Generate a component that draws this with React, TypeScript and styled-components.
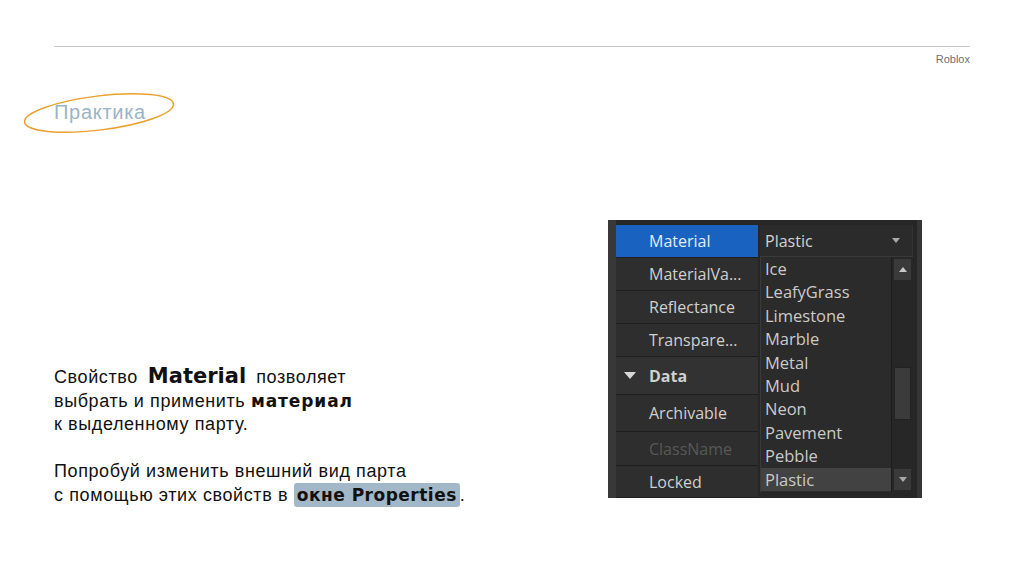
import styled, { createGlobalStyle } from "styled-components";

const GlobalStyle = createGlobalStyle`
  html, body {
    margin: 0;
    padding: 0;
    background: #ffffff;
  }
`;

const Slide = styled.div`
  width: 1024px;
  height: 574px;
  overflow: hidden;
  background: #ffffff;
  font-family: "Liberation Sans", Arial, sans-serif;
`;

const Header = styled.header`
  margin: 46px 54px 0 54px;
  border-top: 1px solid #c4c4c4;
`;

const Source = styled.div`
  margin-top: 5px;
  text-align: right;
  font-size: 11px;
  line-height: 14px;
  color: #6f6f6f;
`;

const TitleWrap = styled.div`
  position: relative;
  display: inline-block;
  margin: 34px 0 0 54px;
`;

const Title = styled.h1`
  margin: 0;
  font-size: 20px;
  line-height: 24px;
  font-weight: 400;
  letter-spacing: 0.7px;
  color: #9bb4c6;
`;

const Circle = styled.svg`
  position: absolute;
  left: -30px;
  top: -8px;
  overflow: visible;
  pointer-events: none;
`;

const Content = styled.div`
  display: flex;
  margin-top: 96px;
`;

const TextColumn = styled.div`
  width: 554px;
  padding: 145px 0 0 54px;
  font-size: 18px;
  line-height: 23.5px;
  letter-spacing: 0.6px;
  color: #111111;
`;

const Paragraph = styled.p`
  margin: 0 0 23.5px 0;
`;

const Big = styled.b`
  font-family: "DejaVu Sans", sans-serif;
  font-size: 21px;
  letter-spacing: 0;
  margin: 0 10px 0 10px;
`;

const Mark = styled.b<{ $hl?: boolean }>`
  font-family: "DejaVu Sans", sans-serif;
  font-size: 17px;
  letter-spacing: ${(p) => (p.$hl ? "0.5px" : "0.9px")};
  background: ${(p) => (p.$hl ? "#a2b8c8" : "transparent")};
  border-radius: 3px;
  padding: ${(p) => (p.$hl ? "2px 3px" : "0")};
`;

/* Properties panel */

const Panel = styled.div`
  display: flex;
  width: 306px;
  height: 273px;
  padding-top: 5px;
  background: #262626;
  border-left: 8px solid #383838;
  font-family: "Open Sans", "Noto Sans", sans-serif;
  font-size: 16px;
`;

const NameColumn = styled.div`
  display: flex;
  flex-direction: column;
  width: 142px;
  margin-right: 2px;
`;

const NameRow = styled.div<{ $h: number; $active?: boolean; $dim?: boolean; $section?: boolean }>`
  display: flex;
  align-items: center;
  height: ${(p) => p.$h - 1}px;
  border-bottom: 1px solid #1e1e1e;
  padding-left: ${(p) => (p.$section ? "8px" : "33px")};
  background: ${(p) => (p.$active ? "#1a62bf" : p.$section ? "#323232" : "#2e2e2e")};
  color: ${(p) => (p.$active ? "#e4ecf6" : p.$dim ? "#585858" : "#d0d0d0")};
  font-weight: ${(p) => (p.$section ? 700 : 400)};
  white-space: nowrap;
`;

const Caret = styled.span`
  width: 0;
  height: 0;
  margin-right: 13px;
  border-left: 6px solid transparent;
  border-right: 6px solid transparent;
  border-top: 7px solid #d8d8d8;
`;

const DropDown = styled.div`
  display: flex;
  flex-direction: column;
  width: 153px;
`;

const DropHead = styled.div`
  display: flex;
  align-items: center;
  justify-content: space-between;
  height: 31px;
  padding: 0 12px 0 5px;
  background: #2b2b2b;
  border-bottom: 1px solid #3a3a3a;
  border-right: 1px solid #333333;
  color: #d2d2d2;
`;

const SmallArrow = styled.span<{ $up?: boolean }>`
  width: 0;
  height: 0;
  border-left: 4px solid transparent;
  border-right: 4px solid transparent;
  ${(p) => (p.$up ? "border-bottom: 5px solid #c9c9c9;" : "border-top: 5px solid #a9a9a9;")}
`;

const List = styled.div`
  display: flex;
  height: 235px;
  background: #2b2b2b;
  border-left: 1px solid #3a3a3a;
`;

const Items = styled.div`
  flex: 1;
  display: flex;
  flex-direction: column;
  font-size: 16.5px;
`;

const Item = styled.div<{ $selected?: boolean }>`
  height: 23.4px;
  line-height: 23.4px;
  padding-left: 4px;
  color: #cacaca;
  background: ${(p) => (p.$selected ? "#424242" : "transparent")};
`;

const Scrollbar = styled.div`
  display: flex;
  flex-direction: column;
  width: 22px;
  padding: 2px;
  box-sizing: border-box;
  background: #272727;
  border-left: 1px solid #1c1c1c;
`;

const ScrollButton = styled.div`
  display: flex;
  align-items: center;
  justify-content: center;
  height: 21px;
  background: #3a3a3a;
`;

const Track = styled.div`
  flex: 1;
`;

const Thumb = styled.div`
  height: 53px;
  margin-top: 87px;
  background: #3b3b3b;
  border: 1px solid #222222;
  box-sizing: border-box;
`;

const Gutter = styled.div`
  width: 5px;
  margin-left: 4px;
  margin-top: -5px;
  background: #353535;
`;

const rows = [
  { name: "Material", h: 33, active: true },
  { name: "MaterialVa...", h: 33 },
  { name: "Reflectance", h: 33 },
  { name: "Transpare...", h: 33 },
  { name: "Data", h: 38, section: true },
  { name: "Archivable", h: 37 },
  { name: "ClassName", h: 34, dim: true },
  { name: "Locked", h: 32 },
];

const materials = [
  "Ice",
  "LeafyGrass",
  "Limestone",
  "Marble",
  "Metal",
  "Mud",
  "Neon",
  "Pavement",
  "Pebble",
  "Plastic",
];

const App = () => {
  return (
    <Slide>
      <GlobalStyle />
      <Header>
        <Source>Roblox</Source>
      </Header>
      <TitleWrap>
        <Title>Практика</Title>
        <Circle width="152" height="44" viewBox="0 0 152 44">
          <ellipse
            cx="75"
            cy="21"
            rx="75"
            ry="17"
            transform="rotate(-7 75 21)"
            fill="none"
            stroke="#e9a02c"
            strokeWidth="1.5"
          />
        </Circle>
      </TitleWrap>
      <Content>
        <TextColumn>
          <Paragraph>
            Свойство<Big>Material</Big>позволяет
            <br />
            выбрать и применить <Mark>материал</Mark>
            <br />к выделенному парту.
          </Paragraph>
          <Paragraph>
            Попробуй изменить внешний вид парта
            <br />с помощью этих свойств в <Mark $hl>окне Properties</Mark>.
          </Paragraph>
        </TextColumn>
        <Panel>
          <NameColumn>
            {rows.map((r) => (
              <NameRow
                key={r.name}
                $h={r.h}
                $active={r.active}
                $dim={r.dim}
                $section={r.section}
              >
                {r.section && <Caret />}
                {r.name}
              </NameRow>
            ))}
          </NameColumn>
          <DropDown>
            <DropHead>
              Plastic
              <SmallArrow />
            </DropHead>
            <List>
              <Items>
                {materials.map((m) => (
                  <Item key={m} $selected={m === "Plastic"}>
                    {m}
                  </Item>
                ))}
              </Items>
              <Scrollbar>
                <ScrollButton>
                  <SmallArrow $up />
                </ScrollButton>
                <Track>
                  <Thumb />
                </Track>
                <ScrollButton>
                  <SmallArrow />
                </ScrollButton>
              </Scrollbar>
            </List>
          </DropDown>
          <Gutter />
        </Panel>
      </Content>
    </Slide>
  );
};

export default App;
